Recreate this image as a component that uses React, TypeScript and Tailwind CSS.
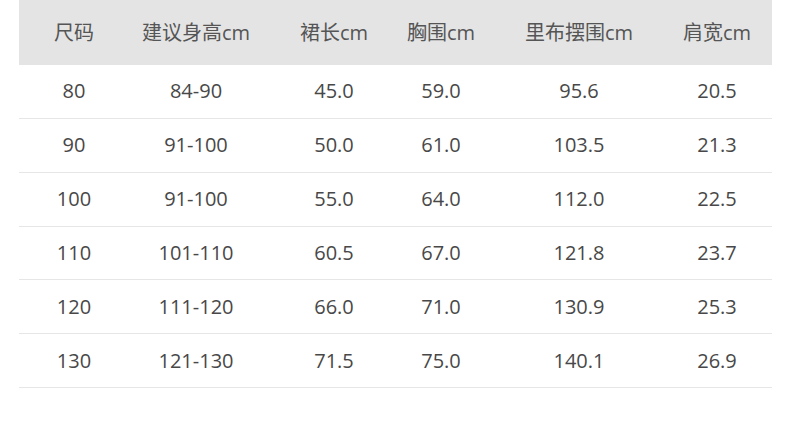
import React from "react";

const headers = ["尺码", "建议身高cm", "裙长cm", "胸围cm", "里布摆围cm", "肩宽cm"];
const rows = [
  ["80", "84-90", "45.0", "59.0", "95.6", "20.5"],
  ["90", "91-100", "50.0", "61.0", "103.5", "21.3"],
  ["100", "91-100", "55.0", "64.0", "112.0", "22.5"],
  ["110", "101-110", "60.5", "67.0", "121.8", "23.7"],
  ["120", "111-120", "66.0", "71.0", "130.9", "25.3"],
  ["130", "121-130", "71.5", "75.0", "140.1", "26.9"],
];

const cols = "grid grid-cols-[110px_134px_142px_72px_204px_72px_1fr]";

export default function App() {
  return (
    <div
      className="w-[790px] h-[431px] bg-white pl-[19px] pr-[18px]"
      style={{ fontFamily: '"Open Sans", "Noto Sans CJK SC", sans-serif' }}
    >
      <div className={`${cols} h-[65px] items-center bg-[#e4e4e4] text-[20px] text-[#555]`}>
        {headers.map((h) => (
          <div key={h} className="text-center whitespace-nowrap">
            {h}
          </div>
        ))}
        <div />
      </div>
      {rows.map((r, i) => (
        <div
          key={i}
          className={`${cols} h-[53.85px] items-center border-b border-[#e6e6e6] text-[20px] text-[#484848]`}
        >
          {r.map((c, j) => (
            <div key={j} className="text-center whitespace-nowrap">
              {c}
            </div>
          ))}
          <div />
        </div>
      ))}
    </div>
  );
}
